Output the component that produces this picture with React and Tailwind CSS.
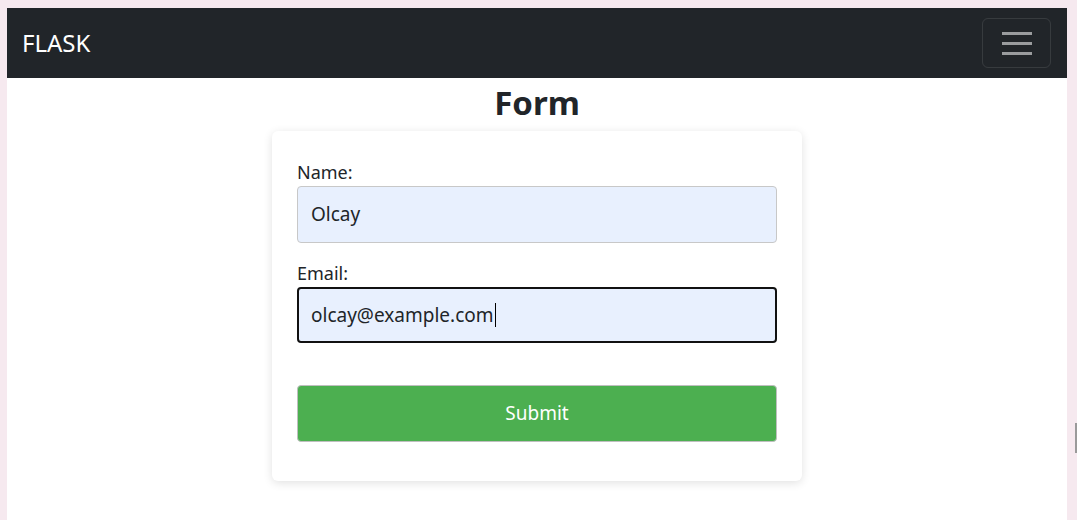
export default function App() {
  return (
    <div className="flex h-[520px] w-[1077px] bg-[#f6e9ef] font-['Noto_Sans',sans-serif] text-[#212529]">
      <div className="ml-[7px] mt-[8px] flex h-[512px] w-[1060px] flex-col bg-white">
        <nav className="flex h-[70px] items-center justify-between bg-[#212529] pl-[15px] pr-[16px]">
          <a href="#" className="text-[24px] leading-none text-white">FLASK</a>
          <button className="flex h-[50px] w-[69px] flex-col items-center justify-center gap-[7px] rounded-[6px] border border-white/10">
            <span className="h-[3px] w-[30px] bg-[#9a9c9e]" />
            <span className="h-[3px] w-[30px] bg-[#9a9c9e]" />
            <span className="h-[3px] w-[30px] bg-[#9a9c9e]" />
          </button>
        </nav>
        <h2 className="mt-[2px] text-center text-[33px] font-bold leading-[46px]">Form</h2>
        <div className="mx-auto mt-[5px] w-[530px] rounded-[6px] bg-white px-[25px] pb-[39px] pt-[27px] shadow-[0_2px_10px_rgba(0,0,0,0.12)]">
          <label className="block text-[18px] leading-[28px]">Name:</label>
          <div className="flex h-[57px] w-[480px] items-center rounded-[4px] border border-[#c8c8c8] bg-[#e8f0fe] px-[13px] text-[19px]">
            Olcay
          </div>
          <label className="mt-[16px] block text-[18px] leading-[28px]">Email:</label>
          <div className="flex h-[56px] w-[480px] items-center rounded-[4px] border-2 border-[#111] bg-[#e8f0fe] px-[12px] text-[19px]">
            olcay@example.com
            <span className="ml-[1px] h-[24px] w-[1px] bg-black" />
          </div>
          <button className="mt-[42px] flex h-[57px] w-[480px] items-center justify-center rounded-[4px] border border-[#bfbfbf] bg-[#4caf50] text-[19px] text-white">
            Submit
          </button>
        </div>
      </div>
      <div className="flex flex-1 flex-col">
        <div className="ml-auto mt-[423px] h-[30px] w-[2px] bg-[#9a9a9a]" />
      </div>
    </div>
  );
}
